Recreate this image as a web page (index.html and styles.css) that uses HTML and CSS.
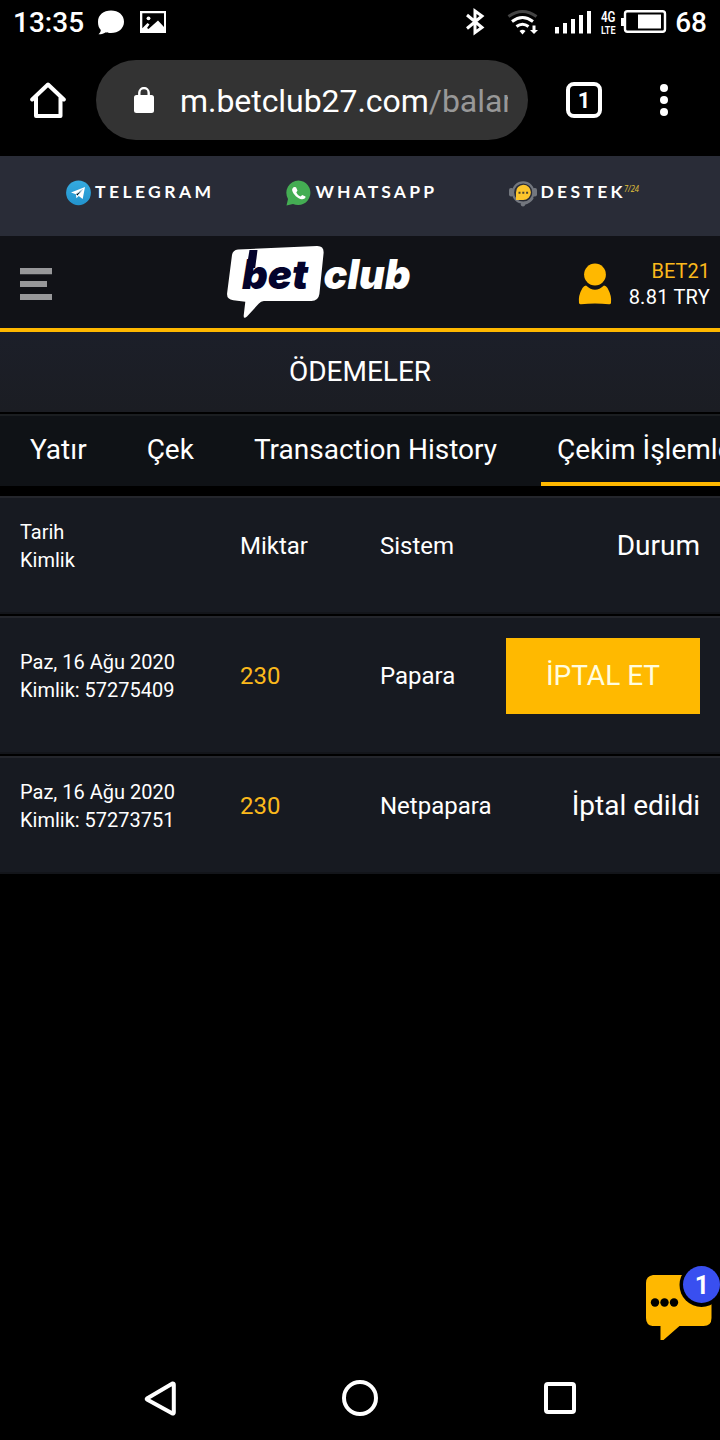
FILE: index.html
```html
<!DOCTYPE html>
<html lang="tr">
<head>
<meta charset="utf-8">
<title>Ödemeler</title>
<link rel="stylesheet" href="styles.css">
</head>
<body>
<div class="screen">
  <div class="status">
    <span class="clock">13:35</span>
    <svg class="st-chat" width="28" height="26" viewBox="0 0 28 26"><path fill="#fff" d="M14 .5C21.500 .5 27 5 27 11.700S21.500 23 14 23c-2 0-3.500-.2-5-.8C7 23.500 4.500 24.400 1.500 24.300 3 23 3.800 21.500 3.800 20 1.800 18 1 15 1 11.700 1 5 6.500 .5 14 .5z"/></svg>
    <svg class="st-pic" width="26" height="22" viewBox="0 0 26 22"><path fill="#fff" fill-rule="evenodd" d="M0 0h26v22H0zM2.300 2.300v15L7.500 12l2 1.500-2.500 3.500 1.500 1 9.500-8.500 6 6.500V2.300z"/><circle cx="8.500" cy="7.300" r="1.900" fill="#fff"/></svg>
    <span class="grow"></span>
    <svg class="st-icons" width="126" height="28" viewBox="466 8 126 28" fill="none">
      <path stroke="#fff" stroke-width="3" d="M467 15l15 12.500-7 5V11l7 5-15 12.500"/>
      <path stroke="#444" stroke-width="3" d="M508.500 16.500q14-10 28 0"/>
      <path stroke="#fff" stroke-width="3" d="M512 21.500q10.500-8 21 0M516.500 26.500q6-4.500 12 0"/>
      <path fill="#fff" d="M519.500 31q3-2.500 6 0l-3 3.500zM532.500 25.500h3V30h2.500l-4 4-4-4h2.500z"/>
      <path fill="#fff" d="M555 27h4v6.500h-4zM563 23h4v10.500h-4zM571 19h4v14.500h-4zM579 15h4v18.500h-4zM587 11h4v22.500h-4z"/>
    </svg>
    <svg class="st-net" width="20" height="30" viewBox="-2 -3 20 30"><text x="0" y="12" textLength="14.500" lengthAdjust="spacingAndGlyphs" class="net-a">4G</text><text x="0" y="23.500" textLength="14.500" lengthAdjust="spacingAndGlyphs" class="net-b">LTE</text></svg>
    <svg class="st-bat" width="46" height="24" viewBox="0 0 46 24"><rect x="4" y="1.200" width="40" height="20.600" rx="2.500" fill="none" stroke="#fff" stroke-width="2.400"/><path fill="#fff" d="M0 8h3v8H0zM17 4.500h23V18.500H17z"/></svg>
    <span class="pct">68</span>
  </div>

  <div class="browser">
    <svg width="36" height="36" viewBox="0 0 36 36" fill="none" stroke="#fff" stroke-width="4" stroke-linecap="round" stroke-linejoin="round"><path d="M2.200 17.500L18 2.500l15.800 15M6 15.500V34h24.500V15.500"/></svg>
    <div class="url">
      <svg width="20" height="26" viewBox="0 0 20 26"><rect y="8" width="20" height="18" rx="2.500" fill="#fff"/><path d="M5.300 9V5.800a4.700 4.700 0 0 1 9.400 0V9" fill="none" stroke="#fff" stroke-width="2.400"/></svg>
      <div class="addr">m.betclub27.com<span>/balance</span></div>
    </div>
    <div class="tabcount">1</div>
    <svg width="8" height="32" viewBox="0 0 8 32" fill="#fff"><circle cx="4" cy="4" r="4"/><circle cx="4" cy="16" r="4"/><circle cx="4" cy="28" r="4"/></svg>
  </div>

  <div class="support">
    <svg class="s-tg" width="150" height="28" viewBox="65 178 150 28">
      <defs><linearGradient id="tg" x2="0" y2="1"><stop stop-color="#35abe0"/><stop offset="1" stop-color="#2293cd"/></linearGradient></defs>
      <circle cx="78.500" cy="192.800" r="12.400" fill="url(#tg)"/><path fill="#fff" d="M71 192.500l14-5.500-2.300 12-4-3-2.300 2.300-.5-4z"/><path stroke="#a9d4eb" stroke-width=".9" d="M76 194.300l6.500-4.800-4.800 6"/>
      <text x="95" y="198.200" textLength="116" class="brandtext">TELEGRAM</text>
    </svg>
    <svg class="s-wa" width="154" height="28" viewBox="285 178 154 28">
      <path fill="#44ad53" d="M298.500 180.500a12.300 12.300 0 1 1-5.500 23.500l-6.500 1.500 1.500-6.500a12.300 12.300 0 0 1 10.500-18.500z"/><path fill="#fff" d="M294.200 187l1.800.3 1.500 3.200-1.200 2c1 2 2.200 3 4.200 4l1.800-1.600 3.200 1.600c.3 1.800-1.800 3-3.800 2.800-4-.5-8.500-5-9.500-8.800-.3-1.500.5-3 2-3.500z"/>
      <text x="315.500" y="198.200" textLength="118.500" class="brandtext">WHATSAPP</text>
    </svg>
    <svg class="s-ds" width="134" height="30" viewBox="508 178 134 30">
      <circle cx="523.200" cy="192.500" r="10.200" fill="none" stroke="#73777e" stroke-width="2.200"/><rect x="509" y="188" width="4.500" height="8.500" rx="2" fill="#73777e"/><rect x="532.500" y="188" width="4.500" height="8.500" rx="2" fill="#73777e"/><path d="M533 198q-3 4.500-9 6" fill="none" stroke="#73777e" stroke-width="1.800"/><circle cx="523" cy="204.300" r="2.200" fill="#73777e"/>
      <path fill="#fcc52c" d="M523.300 184.700a7.500 7.500 0 1 1 0 15.200H516v-7.500a7.500 7.500 0 0 1 7.300-7.700z"/><path fill="#4a4330" d="M518.500 191.700h2v2h-2zm3.800 0h2v2h-2zm3.800 0h2v2h-2z"/>
      <text x="540.500" y="198.200" textLength="82" class="brandtext">DESTEK</text><text x="624" y="191.500" textLength="15" lengthAdjust="spacingAndGlyphs" class="hours">7/24</text>
    </svg>
  </div>

  <header class="header">
    <svg class="menu" width="32" height="32" viewBox="0 0 32 32" fill="#98989a"><path d="M0 0h32v6.300H0zM0 13h27v6H0zM0 26h32v6H0z"/></svg>
    <svg class="logo" width="188" height="76" viewBox="226 244 188 76">
      <path fill="#fff" d="M238 249.500L317 246q7-.2 6.600 7l-4.200 41q-1 6.800-8 7h-47.500q-3 0-5 2.500L247 316.500q-3.500 3-3.300-1l1.600-13.800-12-1.500q-6.800-1-6.200-7L232 255q.8-5 6-5.500z"/>
      <path fill="#04032c" d="M249.500 250h8l-2.300 18h-8.700z"/>
      <text x="242" y="288.500" textLength="66" lengthAdjust="spacingAndGlyphs" class="logotext navy">bet</text>
      <text x="323.500" y="288.500" textLength="87" lengthAdjust="spacingAndGlyphs" class="logotext white">club</text>
    </svg>
    <div class="account">
      <svg width="34" height="42" viewBox="0 0 34 42" fill="#ffb800"><ellipse cx="17" cy="11.500" rx="10.900" ry="11"/><path d="M8 22.500q9 8.500 18 0 2 0 3.500 2.500 4.500 8 3.500 15-.5 1.500-2 1.200-14-1.500-28 0-1.500.2-2-1.200-1-7.500 3.500-15Q6 22.500 8 22.500z"/></svg>
      <div class="acctext"><span class="gold">BET21</span><span class="amount">8.81 TRY</span></div>
    </div>
  </header>

  <h1 class="title">ÖDEMELER</h1>
  <nav class="tabs"><a>Yatır</a><a>Çek</a><a>Transaction History</a><a class="active">Çekim İşlemleri</a></nav>

  <main class="list">
    <section class="row"><div class="id">Tarih<br>Kimlik</div><div class="mid">Miktar</div><div class="mid">Sistem</div><div class="state">Durum</div></section>
    <section class="row tall"><div class="id">Paz, 16 Ağu 2020<br>Kimlik: 57275409</div><div class="mid gold">230</div><div class="mid">Papara</div><div class="state"><button class="cancel">İPTAL ET</button></div></section>
    <section class="row"><div class="id">Paz, 16 Ağu 2020<br>Kimlik: 57273751</div><div class="mid gold">230</div><div class="mid">Netpapara</div><div class="state">İptal edildi</div></section>
  </main>

  <svg class="chat" width="74" height="76" viewBox="646 1265 74 76">
    <path fill="#ffb800" d="M653 1275h52q6.500 0 6.500 7v36q0 8-8 8h-24l-16 14h-3v-14h-8q-6.500-1-6.500-8v-35q0-7 7-8z"/>
    <circle cx="701.500" cy="1285" r="22" fill="#000"/><circle cx="701.500" cy="1284.500" r="18.500" fill="#394ff0"/>
    <circle cx="655" cy="1302.500" r="4.200"/><circle cx="664.500" cy="1302.500" r="4.200"/><circle cx="674" cy="1302.500" r="4.200"/>
    <text x="702" y="1293.500" class="badge" text-anchor="middle">1</text>
  </svg>

  <footer class="navbar">
    <svg width="36" height="38" viewBox="0 0 36 38"><path d="M4 19.500L29.500 4.500q1.300-.3 1.300 1.300v27.400q0 1.500-1.300 1.300L4 20.500q-.6-.5 0-1z"/></svg>
    <svg width="38" height="38" viewBox="0 0 38 38"><circle cx="18" cy="19" r="16"/></svg>
    <svg width="34" height="34" viewBox="0 0 34 34"><rect x="3" y="3" width="28" height="28" rx="2"/></svg>
  </footer>
</div>
</body>
</html>
```

FILE: styles.css
```css
* { box-sizing: border-box; }
body { margin: 0; background: #000; color: #fff; font-family: Roboto, "Noto Sans", sans-serif; }
svg { display: block; flex: none; }
.screen { width: 720px; height: 1440px; overflow: hidden; display: flex; flex-direction: column; position: relative; }
.grow { flex: 1; }
.gold { color: #fbb91c; }

.status { height: 46px; display: flex; align-items: center; padding: 0 13px 2px 13px; }
.clock, .pct { font-size: 28px; font-weight: 500; }
.clock { width: 84px; }
.st-chat { margin-top: 1px; }
.st-pic { margin-left: 15px; }
.st-net { margin: 0 2px 0 7px; }
.st-bat { margin-right: 8px; }
.net-a, .net-b { fill: #fff; font-weight: 600; }
.net-a { font-size: 14px; }
.net-b { font-size: 11px; }

.browser { height: 110px; display: flex; align-items: center; padding: 0 0 2px 30px; }
.url { width: 432px; height: 80px; margin: 0 38px 0 30px; border-radius: 40px; background: #333; display: flex; align-items: center; padding-left: 38px; }
.addr { width: 328px; margin-left: 26px; overflow: hidden; white-space: nowrap; font-size: 32px; line-height: 44px; padding-top: 2px; letter-spacing: -.05px; }
.addr span { color: #989898; }
.tabcount { width: 36px; height: 36px; border: 4px solid #fff; border-radius: 8px; font-size: 22px; font-weight: 700; line-height: 29px; text-align: center; margin-right: 58px; }

.support { height: 80px; background: #292c37; display: flex; align-items: flex-start; padding: 22px 0 0 65px; }
.s-wa { margin-left: 70px; }
.s-ds { margin-left: 69px; }
.brandtext { font: 700 17.5px Lato, sans-serif; fill: #fff; }
.hours { font: italic 9px "Open Sans", sans-serif; fill: #e0c23a; }

.header { height: 96px; border-bottom: 4px solid #ffb800; background: #111217; display: flex; align-items: center; padding: 0 10px 0 20px; }
.menu { margin-top: 4px; }
.logo { margin-left: 174px; }
.logotext { font: italic 900 41px Inter, sans-serif; }
.navy { fill: #04032c; }
.white { fill: #fff; }
.account { margin-left: auto; display: flex; align-items: center; gap: 17px; padding-top: 3px; }
.acctext { display: flex; flex-direction: column; align-items: flex-end; font-size: 20px; line-height: 26px; }
.amount { letter-spacing: .25px; }

.title { margin: 0; height: 80px; background: linear-gradient(#1c1f29, #1b1d23); font-size: 28px; font-weight: 400; line-height: 80px; text-align: center; }
.tabs { height: 72px; margin-top: 2px; border-top: 2px solid #1b1e21; background: #0f1216; display: flex; font-size: 28px; line-height: 68px; white-space: nowrap; overflow: hidden; }
.tabs a { padding: 0 30px; flex: none; }
.tabs .active { height: 70px; border-bottom: 4px solid #ffb800; padding: 0 16px; margin-left: 14px; }

.list { display: flex; flex-direction: column; gap: 2px; margin-top: 10px; }
.row { height: 118px; background: #171a21; border-top: 2px solid #24262c; border-bottom: 2px solid #13151a; display: grid; grid-template-columns: 220px 140px 126px 1fr; padding: 20px 20px 0; align-items: start; }
.tall { height: 138px; }
.id { font-size: 20px; line-height: 28px; }
.mid { font-size: 24px; line-height: 56px; }
.state { font-size: 28px; line-height: 56px; text-align: right; white-space: nowrap; }
.tall .id, .tall .mid { padding-top: 10px; }
.cancel { display: block; width: 194px; height: 76px; border: 0; padding: 0; background: #ffb900; color: #fffde0; font: 28px/74px Roboto, sans-serif; }

.chat { position: absolute; right: 0; bottom: 99px; }
.badge { font: 700 25px Roboto, sans-serif; fill: #fff; }

.navbar { margin-top: auto; height: 84px; display: flex; align-items: center; justify-content: space-between; padding: 0 143px; fill: none; }
.navbar svg { stroke: #fff; stroke-width: 4; stroke-linejoin: round; }
```
